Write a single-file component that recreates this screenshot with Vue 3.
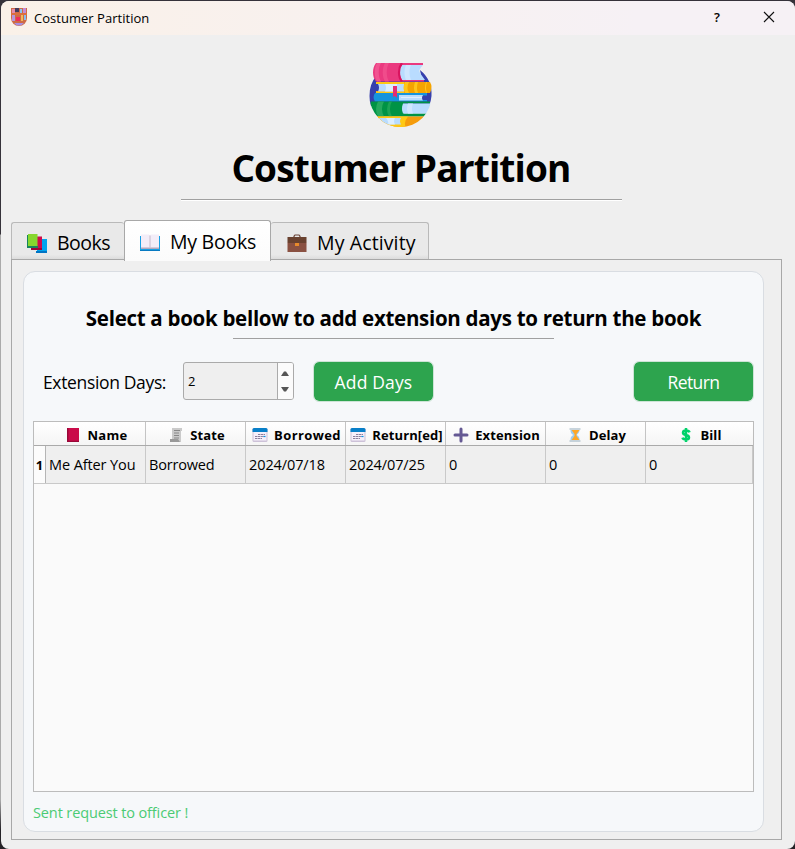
<script setup>
import { ref } from 'vue'

const tabs = [
  { id: 'books', label: 'Books' },
  { id: 'mine', label: 'My Books' },
  { id: 'activity', label: 'My Activity' },
]
const active = ref('mine')
const days = ref(2)
const columns = [
  { id: 'name', label: 'Name' },
  { id: 'state', label: 'State' },
  { id: 'borrowed', label: 'Borrowed' },
  { id: 'returned', label: 'Return[ed]' },
  { id: 'extension', label: 'Extension' },
  { id: 'delay', label: 'Delay' },
  { id: 'bill', label: 'Bill' },
]
const rows = [['Me After You', 'Borrowed', '2024/07/18', '2024/07/25', '0', '0', '0']]
</script>

<template>
  <div class="desktop">
    <div class="window">
      <header class="titlebar">
        <svg class="app-icon" viewBox="0 0 18 18">
          <path d="M1 0h16v10a8 8 0 0 1-16 0z" fill="#cf6a45" />
          <path d="M2 1h3v4H2z" fill="#e58ba8" /><path d="M5 0h4v4H5z" fill="#453a5c" /><path d="M10 1h2v4h-2z" fill="#8cc4ee" /><path d="M13 0h3v5h-3z" fill="#c58ad4" />
          <path d="M1 5.500h16v1H1z" fill="#e8743a" />
          <path d="M2 7h3v6H2z" fill="#b795dc" /><path d="M6 9h4v4H6z" fill="#ee2c58" /><path d="M11 7h2v6h-2z" fill="#f0b95e" /><path d="M14 7h2v5h-2z" fill="#86bdf0" />
          <path d="M4 15h10l-3 2.500H7z" fill="#a78fe2" />
        </svg>
        <span class="title-text">Costumer Partition</span>
        <span class="help">?</span>
        <svg class="close" viewBox="0 0 12 12"><path d="M1 1l10 10M11 1L1 11" stroke="#111" stroke-width="1.1" fill="none" /></svg>
      </header>

      <svg class="logo" viewBox="0 0 64 64">
        <defs><clipPath id="disc"><path d="M0 0h64v33H62.500a31 31 0 0 1-62 0z" /></clipPath></defs>
        <path d="M.5 33A31 31 0 0 1 8 12H52L51 7A31 31 0 0 1 62.500 33A31 31 0 0 1 60 43H2A31 31 0 0 1 .5 33z" fill="#3640ad" />
        <g clip-path="url(#disc)">
          <path d="M7 0h47v2H34v15h21v1.500H7C3 14 3 5 7 0z" fill="#ea397f" />
          <path d="M8 0h4c-3 5-3 14 0 18.500H8C5 14 5 5 8 0z" fill="#f15491" />
          <path d="M16 0h4c-3 5-3 14 0 18.500h-4C13 14 13 5 16 0z" fill="#f04c8b" />
          <path d="M33 2h21q-5 5-3 8l5 7H33c-3-5-3-11 0-15z" fill="#b9dcff" />
          <path d="M37 2h5c-2 4-2 10 0 15h-5c-2-4-2-11 0-15z" fill="#cfe6ff" />
          <path d="M33 0c-4 5-4 14 0 18.500" stroke="#d9145f" stroke-width="2.200" fill="none" />
          <path d="M7 19h54q3 5 0 11H7v-2h27v-7H7z" fill="#f5a400" />
          <path d="M7 19h28v2H7zM7 28.500h28V30H7z" fill="#ffc913" />
          <path d="M9 21h26v7.500H9q2-4 0-7.500z" fill="#b9dcff" /><path d="M16 21h12v7.500H16q2-4 0-7.500z" fill="#dceeff" />
          <path d="M36 19h4q-3 6 0 11h-4q-3-5 0-11z" fill="#ffc51a" />
          <path d="M46 19h3q-2 6 0 11h-3q-2-5 0-11zM57 19h1q-2 6 0 11h-1q-2-5 0-11z" fill="#ffc51a" />
          <path d="M6 30h52v2.500H31V37h27v1.500H6q-3-4 0-8.500z" fill="#1694de" />
          <path d="M30 32h24q-2 3 0 5.500H30z" fill="#b9dcff" /><path d="M32 34h21v1H32z" fill="#dceeff" />
          <path d="M2 38.500h59v2H35q-3 5 0 10h25v3H2q-4-7 0-15z" fill="#009345" />
          <path d="M9 38.500h6q-4 7 0 15H9q-4-7 0-15z" fill="#25a85e" /><path d="M20 38.500h3q-4 7 0 15h-3q-4-7 0-15z" fill="#1ba355" />
          <path d="M34 40.500h28l-2 10H34q-2-5 0-10z" fill="#b9dcff" /><path d="M39 40.500h5q-2 5 0 10h-5q-2-5 0-10z" fill="#cfe6ff" />
          <path d="M5 53.500h56V64H5z" fill="#f59c0c" /><path d="M5 53.500h34q-5 6-2 11H5z" fill="#ffc913" />
          <path d="M8 55h24q-2 3 0 6.500H12z" fill="#b9dcff" /><path d="M17 55h9q-2 3 0 6.500h-7q1-3-2-6.500z" fill="#dceeff" />
          <path d="M24 23h4v12l-2-2-2 1z" fill="#e52c73" />
        </g>
      </svg>
      <h1>Costumer Partition</h1>
      <div class="rule main-rule"></div>

      <nav class="tabs">
        <button v-for="tab in tabs" :key="tab.id" class="tab" :class="[tab.id, { active: active === tab.id }]" @click="active = tab.id">
          <svg v-if="tab.id === 'books'" class="tab-icon" viewBox="0 0 20 20">
            <path d="M10 5h10v14H10z" fill="#00a4ee" /><path d="M9 17h11v2H9z" fill="#0074c4" />
            <path d="M5 2.500h10V16H5z" fill="#cd0d4c" /><path d="M4 14h11v2H4z" fill="#9c0739" />
            <path d="M0 1h1v11h10v2H0z" fill="#16845c" /><path d="M1 0h9.500v12H1z" fill="#86d72f" />
          </svg>
          <svg v-else-if="tab.id === 'mine'" class="tab-icon" viewBox="0 0 20 20">
            <path d="M0 3h20v15H0z" fill="#18a0e4" /><path d="M0 17h20v1H0z" fill="#087ac2" />
            <path d="M1 1.500h8l1 1 1-1h8v14H1z" fill="#f3edf8" />
            <path d="M1 14.500h18V16H1z" fill="#b4a8bd" /><path d="M10 2.500v12" stroke="#c6bacb" />
          </svg>
          <svg v-else class="tab-icon" viewBox="0 0 20 20">
            <path d="M7 3V2.300L8 1h4l1 1.300V3" stroke="#6b4438" stroke-width="1.200" fill="none" />
            <path d="M.5 8h19v10H.5z" fill="#8a5142" /><path d="M.5 3h19v5l-1 1h-17l-1-1z" fill="#69412f" /><path d="M8 9h4v3H8z" fill="#e88a2b" />
          </svg>
          <span>{{ tab.label }}</span>
        </button>
      </nav>

      <main class="pane">
        <section class="card">
          <h2>Select a book bellow to add extension days to return the book</h2>
          <div class="rule sub-rule"></div>
          <div class="controls">
            <label>Extension Days:</label>
            <div class="spin">
              <span class="spin-value">{{ days }}</span>
              <div class="spin-buttons">
                <svg viewBox="0 0 8 5" @click="days++"><path d="M0 5l3-4.500h2L8 5z" fill="#555" /></svg>
                <svg viewBox="0 0 8 5" @click="days--"><path d="M0 0l3 4.500h2L8 0z" fill="#555" /></svg>
              </div>
            </div>
            <button class="action add">Add Days</button>
            <button class="action return">Return</button>
          </div>

          <div class="table">
            <div class="head">
              <div v-for="col in columns" :key="col.id" class="th" :class="col.id">
                <svg v-if="col.id === 'name'" class="ic" viewBox="0 0 16 16"><path d="M2 1h12v14H2z" fill="#ca0b4a" /><path d="M2 1h1.500v14H2zM2 13.800h12V15H2z" fill="#990838" /></svg>
                <svg v-else-if="col.id === 'state'" class="ic" viewBox="0 0 16 16"><path d="M4 1h10v3h-1v11H2v-3h2z" fill="#cacaca" /><path d="M2 12h8l2 3H2z" fill="#999" /><path d="M6 3.500h6M6 6h5M6 8.500h5M6 11h5" stroke="#888" /></svg>
                <svg v-else-if="col.id === 'borrowed' || col.id === 'returned'" class="ic" viewBox="0 0 16 16"><rect x=".5" y="1" width="15" height="14" rx="1.500" fill="#cdc2d8" /><path d="M1.500 5h13v8.500h-13z" fill="#f5effa" /><path d="M.5 5V2.500Q.5 1 2 1h12q1.500 0 1.500 1.500V5z" fill="#087fc8" /><path d="M6 7.500h7M3 9.500h10M3 11.500h7" stroke="#8c7f9d" stroke-width="1.200" stroke-dasharray="2.300 .5" /><path d="M11.500 9.500h2" stroke="#0b94e5" stroke-width="1.200" /></svg>
                <svg v-else-if="col.id === 'extension'" class="ic" viewBox="0 0 16 16"><path d="M8 2v12M2 8h12" stroke="#655993" stroke-width="3" stroke-linecap="round" /></svg>
                <svg v-else-if="col.id === 'delay'" class="ic" viewBox="0 0 16 16"><path d="M3.500 3h9c0 3-2 4-3 5 2 1 3 2 3 5h-9c0-3 1-4 3-5-2-1-3-2-3-5z" fill="#9fcdef" /><path d="M4.500 3h8L9.500 7v2l3 4h-8l3-4V7z" fill="#ffa725" /><path d="M2.500 1.200h11v1.500h-11zM2.500 13.300h11v1.500h-11z" fill="#b7c6d1" /></svg>
                <svg v-else class="ic" viewBox="0 0 16 16"><path d="M11.500 5.300Q11 3.500 8 3.500T5 5.700Q5 7.400 8 8t3 2.500Q11 12.500 8 12.500T4.500 10.700M8 1v14" stroke="#00d26a" stroke-width="2.500" fill="none" /></svg>
                <span>{{ col.label }}</span>
              </div>
            </div>
            <div v-for="(row, i) in rows" :key="i" class="row">
              <div class="index">{{ i + 1 }}</div>
              <div v-for="(cell, j) in row" :key="j" class="td" :class="columns[j].id">{{ cell }}</div>
            </div>
          </div>
          <p class="status">Sent request to officer !</p>
        </section>
      </main>
    </div>
  </div>
</template>

<style>
body { margin: 0; background: #efefef; }
</style>

<style scoped>
* { box-sizing: border-box; }
.desktop {
  width: 795px; height: 849px; padding: 1px 0 0 1px; overflow: hidden;
  background: linear-gradient(#35323a 0 234px, #aaa 235px 800px, #252327 830px);
  font-family: "Open Sans", "Noto Sans", sans-serif; color: #000;
}
.window { height: 848px; border-radius: 8px; background: #efefef; overflow: hidden; display: flex; flex-direction: column; }
.titlebar { flex: none; height: 34px; display: flex; align-items: center; background: linear-gradient(90deg, #faf1e8, #f6f1f5 80%); font-size: 13px; }
.app-icon { width: 18px; height: 18px; margin: -2px 0 0 9px; }
.title-text { margin-left: 6px; letter-spacing: .03px; }
.help { margin-left: auto; width: 8px; font-size: 13px; font-weight: 600; margin-top: -2px; }
.close { width: 12px; height: 12px; margin: -2px 20px 0 41px; }
.logo { flex: none; width: 64px; height: 64px; margin: 28px 0 0 368px; }
h1 { margin: 16px 0 0; height: 50px; line-height: 50px; font-size: 37px; letter-spacing: -.83px; text-align: center; padding-left: 6px; white-space: nowrap; }
.rule { flex: none; height: 2px; border-top: 1px solid #a0a0a0; border-bottom: 1px solid #fff; }
.main-rule { width: 441px; margin: 6px 0 0 180px; }
.tabs { flex: none; height: 40px; margin: 19px 0 0 10px; display: flex; align-items: flex-end; }
.tab { height: 37px; margin-bottom: 1px; padding: 3px 0 0 15px; display: flex; align-items: center; border: 1px solid #b9b9b9; border-bottom: 0; border-radius: 3px 3px 0 0; background: linear-gradient(#e9e9e9 88%, #dcdcdc); font: 19.500px "Open Sans", sans-serif; color: #000; white-space: nowrap; }
.tab.books { width: 113px; border-right: 0; letter-spacing: -.5px; }
.tab.mine { width: 147px; letter-spacing: -.25px; }
.tab.activity { width: 158px; border-left: 0; padding-left: 16px; letter-spacing: .12px; }
.tab.active { height: 41px; margin-bottom: -1px; padding-top: 1px; border-color: #a8a8a8; background: linear-gradient(#fff, #fbfbfb); z-index: 1; position: relative; }
.tab-icon { width: 20px; height: 20px; margin: 2px 10px 0 0; }
.pane { flex: none; width: 771px; height: 581px; margin: -1px 0 0 10px; padding: 11px; border: 1px solid #a8a8a8; }
.card { width: 741px; height: 561px; border: 1px solid #d9dde2; border-radius: 12px; background: #f6f8fa; padding: 0 9px; display: flex; flex-direction: column; }
h2 { margin: 30px 0 0; height: 32px; line-height: 32px; font-size: 20.500px; letter-spacing: -.29px; text-align: center; white-space: nowrap; }
.sub-rule { width: 321px; margin: 4px 0 0 200px; border-bottom-color: transparent; }
.controls { margin-top: 21px; height: 41px; display: flex; align-items: center; }
label { width: 150px; padding-left: 10px; font-size: 17.500px; letter-spacing: -.35px; white-space: nowrap; }
.spin { width: 111px; height: 38px; border: 1px solid #aaa; border-radius: 3px; background: #efefef; display: flex; margin-top: -1px; }
.spin-value { flex: 1; padding-left: 4px; font-size: 13px; line-height: 37px; }
.spin-buttons { width: 16px; border-left: 1px solid #aaa; background: #fbfbfb; display: flex; flex-direction: column; align-items: center; justify-content: center; gap: 11px; border-radius: 0 2px 2px 0; padding-right: 1px; }
.spin-buttons svg { width: 8px; height: 5px; }
.action { width: 121px; height: 41px; padding: 0; border: 1px solid #cde4d6; border-radius: 6px; background: #2da44e; background-clip: padding-box; color: #fff; font: 17.500px "Open Sans", sans-serif; }
.add { margin-left: 19px; letter-spacing: .15px; }
.return { margin-left: auto; letter-spacing: -.6px; }
.table { margin-top: 19px; height: 371px; border: 1px solid #bcbcbc; background: #fafafa; }
.head { height: 24px; display: flex; border-bottom: 1px solid #aaa; background: linear-gradient(#fff, #f5f5f5); }
.th { width: 100px; padding: 2px 0 0 2px; display: flex; align-items: center; justify-content: center; gap: 6px; border-right: 1px solid #c4c4c4; font-weight: 700; font-size: 13px; letter-spacing: .1px; white-space: nowrap; }
.th.name { width: 112px; padding-left: 14px; letter-spacing: .3px; }
.th.borrowed { letter-spacing: .4px; }
.th.bill { flex: 1; border-right: 0; padding-left: 1px; }
.ic { width: 16px; height: 16px; flex: none; }
.row { height: 38px; display: flex; background: #efefef; border-bottom: 1px solid #c9c9c9; }
.index { width: 12px; border-right: 1px solid #b5b5b5; background: #fcfcfc; font: 700 13px/39px "Open Sans", sans-serif; text-align: center; }
.td { width: 100px; padding-left: 3px; border-right: 1px solid #c9c9c9; font-size: 14.500px; line-height: 37px; letter-spacing: -.1px; white-space: nowrap; }
.td.state { letter-spacing: -.2px; }
.td.bill { flex: 1; }
.status { margin: 10px 0 0; height: 22px; line-height: 22px; font-size: 14.500px; letter-spacing: -.12px; color: #4bcb74; white-space: nowrap; }
</style>
